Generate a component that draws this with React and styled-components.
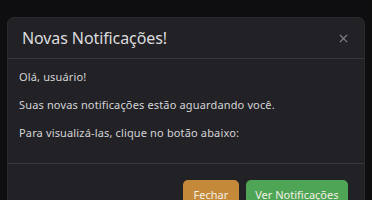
import styled, { createGlobalStyle } from "styled-components";

const GlobalStyle = createGlobalStyle`
  html, body {
    margin: 0;
    padding: 0;
    background: #0e0e10;
  }
  body {
    font-family: "Noto Sans", "Open Sans", sans-serif;
    overflow: hidden;
  }
`;

const Backdrop = styled.div`
  width: 372px;
  height: 200px;
  padding: 17px 7px 0 7px;
  box-sizing: border-box;
`;

const Modal = styled.div`
  background: #222226;
  border-radius: 7px;
  border: 1px solid #2a2a2e;
  color: #d6d6d8;
`;

const Header = styled.div`
  display: flex;
  align-items: center;
  justify-content: space-between;
  height: 40px;
  padding: 0 14px 0 14px;
  border-bottom: 1px solid #38383c;
`;

const Title = styled.h5`
  margin: 0;
  font-size: 16px;
  font-weight: 400;
  color: #dcdcde;
  letter-spacing: -0.1px;
`;

const CloseButton = styled.button`
  background: none;
  border: none;
  padding: 0;
  width: 14px;
  height: 14px;
  display: flex;
  align-items: center;
  justify-content: center;
  cursor: pointer;
`;

const Body = styled.div`
  padding: 10px 11px 10px 11px;
  border-bottom: 1px solid #38383c;
`;

const Text = styled.p`
  margin: 0 0 12px;
  font-size: 11px;
  line-height: 16px;
  letter-spacing: 0.15px;
  color: #d4d4d6;
`;

const Footer = styled.div`
  display: flex;
  justify-content: flex-end;
  gap: 7px;
  padding: 16px 16px 12px;
`;

const Button = styled.button`
  font-family: inherit;
  font-size: 11px;
  height: 28px;
  padding: 0 ${(p) => p.$pad}px;
  border: none;
  border-radius: 5px;
  color: #f2efe6;
  background: ${(p) => p.$bg};
  cursor: pointer;
`;

export default function App() {
  return (
    <>
      <GlobalStyle />
      <Backdrop>
        <Modal>
          <Header>
            <Title>Novas Notificações!</Title>
            <CloseButton aria-label="Fechar">
              <svg width="9" height="9" viewBox="0 0 10 10">
                <path d="M1 1L9 9M9 1L1 9" stroke="#8a8a8e" strokeWidth="1.2" />
              </svg>
            </CloseButton>
          </Header>
          <Body>
            <Text>Olá, usuário!</Text>
            <Text>Suas novas notificações estão aguardando você.</Text>
            <Text>Para visualizá-las, clique no botão abaixo:</Text>
          </Body>
          <Footer>
            <Button $bg="#c48a3a" $pad={10.5}>Fechar</Button>
            <Button $bg="#4fa556" $pad={9.5}>Ver Notificações</Button>
          </Footer>
        </Modal>
      </Backdrop>
    </>
  );
}
